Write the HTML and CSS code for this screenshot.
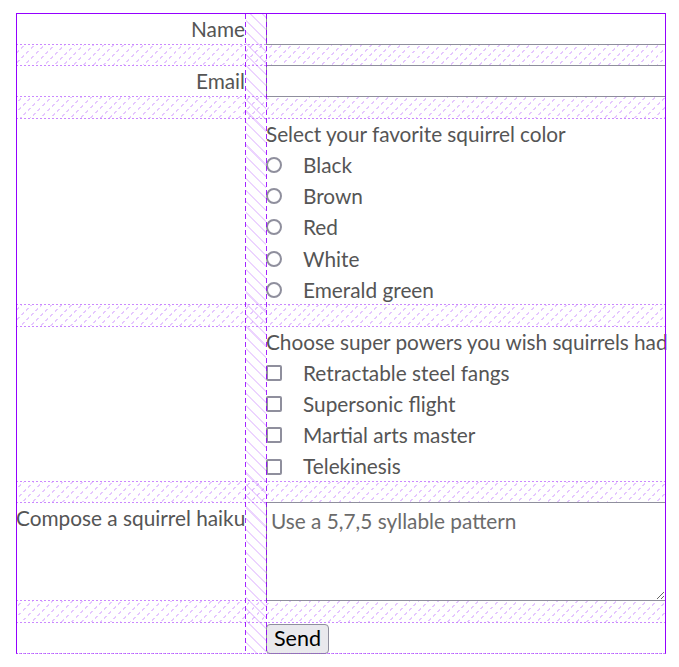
FILE: index.html
```html
<!DOCTYPE html>
<html lang="en">
<head>
<meta charset="utf-8">
<title>Squirrel form</title>
<link rel="stylesheet" href="styles.css">
</head>
<body>
<form class="squirrel-form">
  <div class="row">
    <label class="field-label" for="name">Name</label>
    <input class="text-input" id="name" type="text">
  </div>
  <div class="row">
    <label class="field-label" for="email">Email</label>
    <input class="text-input" id="email" type="email">
  </div>
  <div class="row">
    <span></span>
    <div class="choice-group" role="radiogroup">
      <div class="group-title">Select your favorite squirrel color</div>
      <label class="choice"><input class="radio" type="radio" name="color">Black</label>
      <label class="choice"><input class="radio" type="radio" name="color">Brown</label>
      <label class="choice"><input class="radio" type="radio" name="color">Red</label>
      <label class="choice"><input class="radio" type="radio" name="color">White</label>
      <label class="choice"><input class="radio" type="radio" name="color">Emerald green</label>
    </div>
  </div>
  <div class="row">
    <span></span>
    <div class="choice-group" role="group">
      <div class="group-title">Choose super powers you wish squirrels had</div>
      <label class="choice"><input class="check" type="checkbox">Retractable steel fangs</label>
      <label class="choice"><input class="check" type="checkbox">Supersonic flight</label>
      <label class="choice"><input class="check" type="checkbox">Martial arts master</label>
      <label class="choice"><input class="check" type="checkbox">Telekinesis</label>
    </div>
  </div>
  <div class="row">
    <label class="field-label haiku-label" for="haiku">Compose a squirrel haiku</label>
    <textarea class="haiku" id="haiku" placeholder="Use a 5,7,5 syllable pattern"></textarea>
  </div>
  <div class="row">
    <span></span>
    <div><button class="send" type="button">Send</button></div>
  </div>
</form>
</body>
</html>
```
FILE: styles.css
```css
:root {
  --grid: #9400ff;
  --grid-dash: rgba(148, 0, 255, 0.85);
  --grid-dot: rgba(160, 40, 255, 0.55);
  --grid-hatch: rgba(170, 60, 255, 0.22);
  --text: #555555;
  --control: #8f8f9d;
}

* { box-sizing: border-box; }

html, body { background: #fff; }

body {
  margin: 0;
  padding: 13px 13px 0 16px;
  font-family: Lato, "Noto Sans", sans-serif;
  font-size: 20.8px;
  line-height: 1.5;
  color: var(--text);
}

.squirrel-form {
  position: relative;
  width: 650px;
  display: flex;
  flex-direction: column;
  gap: 20.8px;
  background:
    repeating-linear-gradient(45deg, #fff 0 3px, transparent 3px 6.5px),
    repeating-linear-gradient(135deg, rgba(175, 80, 255, 0.32) 0 1.4px, transparent 1.4px 7px);
}

.squirrel-form::after {
  content: "";
  position: absolute;
  inset: 0;
  pointer-events: none;
  border: 1px solid var(--grid);
  border-bottom: 1px dotted var(--grid-dot);
  background:
    repeating-linear-gradient(180deg, var(--grid-dash) 0 5px, transparent 5px 8px) 228px 0 / 1px 100% no-repeat,
    repeating-linear-gradient(180deg, var(--grid-dash) 0 5px, transparent 5px 8px) 249px 0 / 1px 100% no-repeat,
    repeating-linear-gradient(45deg, transparent 0 6.5px, var(--grid-hatch) 6.5px 8px) 229px 0 / 20px 100% no-repeat;
}

.row {
  display: grid;
  grid-template-columns: 229px 1fr;
  column-gap: 21px;
  min-height: 31.2px;
  background:
    repeating-linear-gradient(90deg, var(--grid-dot) 0 2px, transparent 2px 4px) left top / 100% 1px no-repeat,
    repeating-linear-gradient(90deg, var(--grid-dot) 0 2px, transparent 2px 4px) left bottom / 100% 1px no-repeat,
    #fff;
}

.field-label {
  text-align: right;
  white-space: nowrap;
}

.haiku-label {
  text-align: left;
}

.text-input {
  font: inherit;
  margin: 0;
  height: 31.6px;
  border: 1px solid var(--control);
  border-radius: 0;
  background: #fff;
  padding: 0 4px;
}

.choice-group {
  display: flex;
  flex-direction: column;
}

.group-title {
  white-space: nowrap;
  letter-spacing: -0.05px;
}

.choice {
  display: flex;
  align-items: center;
  white-space: nowrap;
}

.radio,
.check {
  appearance: none;
  -webkit-appearance: none;
  flex: none;
  width: 16px;
  height: 16px;
  margin: 1px 21px 0 0;
  border: 2px solid var(--control);
  background: #fff;
}

.radio { border-radius: 50%; }
.check { border-radius: 2px; }

.haiku {
  font: inherit;
  margin: 0;
  height: 99px;
  padding: 2px 4px;
  border: 1px solid var(--control);
  color: var(--text);
  resize: both;
}

.haiku::placeholder {
  color: #6b6b6b;
}

.send {
  font: inherit;
  font-size: 21.5px;
  line-height: 1.2;
  color: #000;
  height: 30px;
  margin: 0;
  padding: 0 7px;
  background: #e9e9ed;
  border: 1px solid var(--control);
  border-radius: 4px;
}
```
